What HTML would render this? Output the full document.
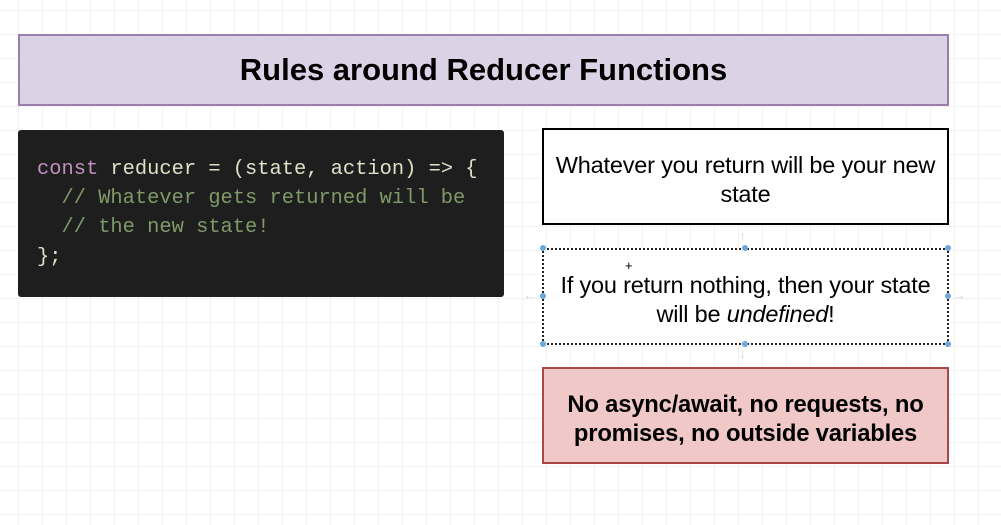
<!DOCTYPE html>
<html><head><style>
body{margin:0;width:1001px;height:525px;overflow:hidden;background:#fff;
background-image:linear-gradient(#f2f2f2 1px,transparent 1px),linear-gradient(90deg,#f2f2f2 1px,transparent 1px);
background-size:24px 24px;background-position:18px 10px;font-family:"Liberation Sans",sans-serif;position:relative}
.b{position:absolute;box-sizing:border-box;display:flex;align-items:center;justify-content:center;text-align:center}
.h{left:18px;top:34px;width:931px;height:72px;background:#dcd2e5;border:2px solid #9a7fae;font-weight:bold;font-size:31px;color:#000}
.code{position:absolute;left:18px;top:130px;width:486px;height:167px;background:#1e1e1e;border-radius:3px;font-family:"Liberation Mono","DejaVu Sans Mono",monospace;font-size:20.4px;line-height:29.2px;color:#e0dfc8;padding:25px 0 0 19px;box-sizing:border-box;white-space:pre}
.k{color:#c08fc0}.c{color:#7f9a68}
.w{left:542px;width:407px;height:97px;background:#fff;border:2px solid #000;font-size:23.5px;line-height:29px;color:#000;padding:7px 4px 0;letter-spacing:-0.2px}
.d{border:2px dotted #222}
.r{background:#f0c8c8;border:2px solid #a84848;font-weight:bold;font-size:23.8px}
.dot{position:absolute;width:6px;height:6px;border-radius:3px;background:#6fa6dc}
.ar{position:absolute;color:#c8dcee;font-size:14px}
</style></head><body>
<div class="b h">Rules around Reducer Functions</div>
<div class="code"><span class="k">const</span> reducer = (state, action) =&gt; {
  <span class="c">// Whatever gets returned will be</span>
  <span class="c">// the new state!</span>
};</div>
<div class="b w" style="top:128px"><span>Whatever you return will be your new state</span></div>
<div class="b w d" style="top:248px;height:97px"><span>If you return nothing, then your state will be <i>undefined</i>!</span></div>
<div class="b w r" style="top:367px"><span>No async/await, no requests, no promises, no outside variables</span></div>
<div class="dot" style="left:540px;top:245px"></div><div class="dot" style="left:742px;top:245px"></div><div class="dot" style="left:945px;top:245px"></div>
<div class="dot" style="left:540px;top:293px"></div><div class="dot" style="left:945px;top:293px"></div>
<div class="dot" style="left:540px;top:341px"></div><div class="dot" style="left:742px;top:341px"></div><div class="dot" style="left:945px;top:341px"></div>
<div class="ar" style="left:739px;top:228px">↑</div><div class="ar" style="left:739px;top:345px">↓</div>
<div class="ar" style="left:523px;top:287px">←</div><div class="ar" style="left:952px;top:287px">→</div>
<div style="position:absolute;left:625px;top:258px;font-size:13px">+</div>
</body></html>
